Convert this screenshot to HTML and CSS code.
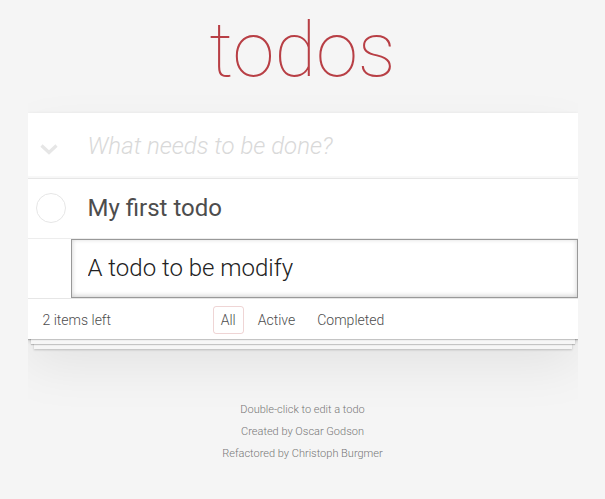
FILE: index.html
```
<!DOCTYPE html>
<html lang="en">
<head>
<meta charset="utf-8">
<title>todos</title>
<link rel="stylesheet" href="styles.css">
</head>
<body>
<section class="todoapp">
  <header class="header">
    <h1 class="title">todos</h1>
  </header>
  <div class="card">
    <div class="new-row">
      <div class="toggle-all">
        <svg width="18" height="11" viewBox="0 0 18 11"><path d="M1.5 1.5 L9 8.5 L16.5 1.5" fill="none" stroke="#e6e6e6" stroke-width="3.2" stroke-linejoin="miter"/></svg>
      </div>
      <input class="new-todo" placeholder="What needs to be done?">
    </div>
    <ul class="todo-list">
      <li class="todo">
        <div class="toggle">
          <svg width="30" height="30" viewBox="0 0 30 30"><circle cx="15" cy="15" r="14.5" fill="none" stroke="#e6e6e6" stroke-width="1"/></svg>
        </div>
        <label class="todo-label">My first todo</label>
      </li>
      <li class="todo editing">
        <input class="edit" value="A todo to be modify">
      </li>
    </ul>
    <footer class="footer">
      <span class="todo-count">2 items left</span>
      <ul class="filters">
        <li><a class="filter selected" href="#/">All</a></li>
        <li><a class="filter" href="#/active">Active</a></li>
        <li><a class="filter" href="#/completed">Completed</a></li>
      </ul>
      <span class="spacer"></span>
    </footer>
  </div>
</section>
<footer class="info">
  <p>Double-click to edit a todo</p>
  <p>Created by Oscar Godson</p>
  <p>Refactored by Christoph Burgmer</p>
</footer>
</body>
</html>
```
FILE: styles.css
```
html, body { margin: 0; padding: 0; }
body {
  font-family: Roboto, "Liberation Sans", sans-serif;
  font-size: 14px;
  line-height: 1.4em;
  font-weight: 300;
  background: #f5f5f5;
  color: #4d4d4d;
  max-width: 550px;
  min-width: 230px;
  margin: 0 auto;
}
.header { display: flex; justify-content: center; }
.title {
  margin: 0;
  height: 113px;
  font-size: 76px;
  font-weight: 100;
  line-height: 100px;
  color: #b83f45;
  text-align: center;
}
.card {
  background: #fff;
  box-shadow: 0 2px 4px 0 rgba(0,0,0,0.2), 0 25px 50px 0 rgba(0,0,0,0.08);
}
.new-row {
  display: flex;
  height: 65px;
  box-shadow: inset 0 -2px 1px rgba(0,0,0,0.03);
}
.toggle-all {
  width: 60px;
  flex: none;
  box-sizing: border-box;
  padding: 31px 0 0 12px;
}
.toggle-all svg { display: block; }
.new-todo {
  flex: 1;
  min-width: 0;
  border: none;
  outline: none;
  background: transparent;
  font-family: inherit;
  font-weight: 300;
  font-size: 24px;
  color: #4d4d4d;
  padding: 16px 16px 16px 0;
  margin: 0;
}
.new-todo::placeholder { font-style: italic; color: #d9d9d9; font-weight: 300; }
.todo-list {
  list-style: none;
  margin: 0;
  padding: 0;
  border-top: 1px solid #e6e6e6;
}
.todo {
  display: flex;
  align-items: center;
  font-size: 24px;
  border-bottom: 1px solid #ededed;
}
.todo.editing { border-bottom: none; padding-left: 43px; }
.toggle { width: 40px; flex: none; display: flex; justify-content: flex-end; }
.toggle svg { display: block; margin-right: 2px; }
.todo-label {
  padding: 15px 15px 15px 20px;
  line-height: 1.2;
  font-weight: 400;
  color: #4d4d4d;
}
.edit {
  display: block;
  width: 100%;
  box-sizing: border-box;
  margin: 0;
  font-family: inherit;
  font-size: 24px;
  font-weight: 300;
  line-height: 1.4em;
  color: #222;
  padding: 12px 16px;
  border: 1px solid #999;
  outline: none;
  box-shadow: inset 0 -1px 5px 0 rgba(0,0,0,0.2);
}
.footer {
  position: relative;
  display: grid;
  grid-template-columns: 1fr auto 1fr;
  align-items: center;
  height: 20px;
  line-height: 20px;
  padding: 10px 15px;
  border-top: 1px solid #e6e6e6;
  font-size: 14px;
  color: #4d4d4d;
}
.footer::before {
  content: '';
  position: absolute;
  right: 0; bottom: 0; left: 0;
  height: 50px;
  overflow: hidden;
  box-shadow: 0 1px 1px rgba(0,0,0,0.2),
              0 8px 0 -3px #f6f6f6,
              0 9px 1px -3px rgba(0,0,0,0.2),
              0 16px 0 -6px #f6f6f6,
              0 17px 2px -6px rgba(0,0,0,0.2);
  pointer-events: none;
}
.todo-count { position: relative; }
.filters {
  position: relative;
  display: flex;
  list-style: none;
  margin: 0;
  padding: 0;
}
.filter {
  display: inline-block;
  margin: -3px 3px;
  padding: 3px 7px;
  line-height: 20px;
  color: inherit;
  text-decoration: none;
  border: 1px solid transparent;
  border-radius: 3px;
}
.filter.selected { border-color: rgba(175,47,47,0.2); }
.info {
  margin: 65px auto 0;
  color: #777;
  font-size: 11px;
  text-align: center;
}
.info p { line-height: 1; margin: 11px 0; }
```
